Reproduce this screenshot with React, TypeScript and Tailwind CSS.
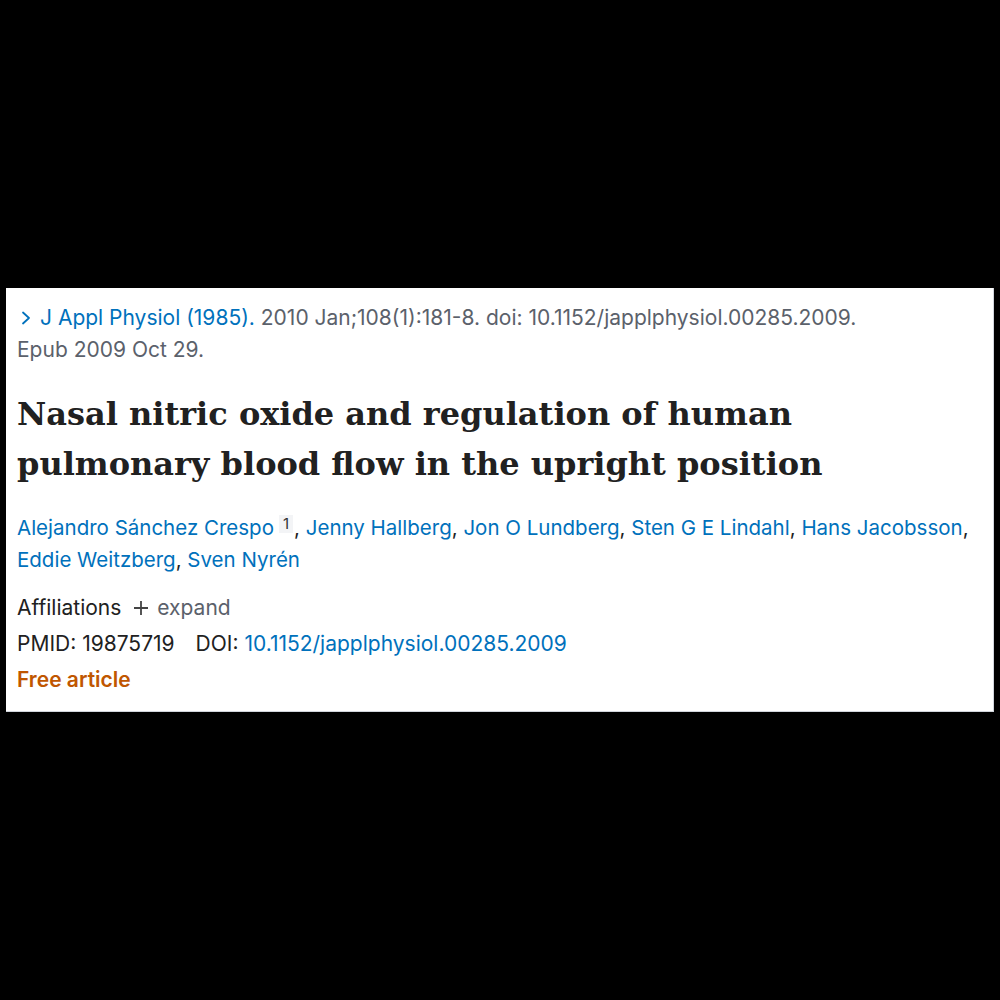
import React from "react";

const sans = { fontFamily: "Inter, 'Liberation Sans', sans-serif" };

export default function App() {
  const authors = [
    "Jenny Hallberg",
    "Jon O Lundberg",
    "Sten G E Lindahl",
    "Hans Jacobsson",
    "Eddie Weitzberg",
    "Sven Nyrén",
  ];
  return (
    <div className="w-[1000px] h-[1000px] bg-black flex items-center justify-center">
      <div className="w-[988px] h-[424px] bg-white border-r border-b border-gray-300 pl-[11px] pt-[14px]" style={sans}>
        <div className="text-[21px] leading-[32px] text-[#5b616b]">
          <span className="text-[#0071bc]">
            <span className="inline-block mr-[8px] ml-[3px]">
              <svg width="12" height="16" viewBox="0 0 12 16" className="inline-block -mt-[3px]">
                <path d="M3 2.5 L9 8 L3 13.5" fill="none" stroke="#0071bc" strokeWidth="1.8" strokeLinecap="round" strokeLinejoin="round" />
              </svg>
            </span>
            J Appl Physiol (1985).
          </span>{" "}
          2010 Jan;108(1):181-8. doi: 10.1152/japplphysiol.00285.2009.
          <br />
          Epub 2009 Oct 29.
        </div>
        <h1
          className="mt-[23px] text-[32px] leading-[50px] font-bold text-[#212121]"
          style={{ fontFamily: "'DejaVu Serif', 'Liberation Serif', serif" }}
        >
          Nasal nitric oxide and regulation of human
          <br />
          pulmonary blood flow in the upright position
        </h1>
        <div className="mt-[23px] text-[20.5px] leading-[32px] text-[#0071bc]">
          <span>Alejandro Sánchez Crespo</span>
          <span className="inline-block ml-[5px] mr-[1px] px-[4px] bg-gray-100 text-[#333] text-[15px] leading-[18px] align-[6px]">1</span>
          <span className="text-[#212121]">, </span>
          {authors.map((a, i) => (
            <React.Fragment key={a}>
              <span>{a}</span>
              {i < authors.length - 1 && <span className="text-[#212121]">, </span>}
            </React.Fragment>
          ))}
        </div>
        <div className="mt-[14px] text-[21px] leading-[36px] text-[#212121]">
          <div className="flex items-center">
            <span>Affiliations</span>
            <svg width="16" height="16" viewBox="0 0 16 16" className="ml-[12px] mr-[8px]">
              <path d="M8 1 V15 M1 8 H15" stroke="#444" strokeWidth="1.8" />
            </svg>
            <span className="text-[#5b616b]">expand</span>
          </div>
          <div>
            PMID: 19875719<span className="inline-block w-[21px]" />DOI:{" "}
            <span className="text-[#0071bc]">10.1152/japplphysiol.00285.2009</span>
          </div>
          <div className="font-semibold text-[#c05600]">Free article</div>
        </div>
      </div>
    </div>
  );
}
